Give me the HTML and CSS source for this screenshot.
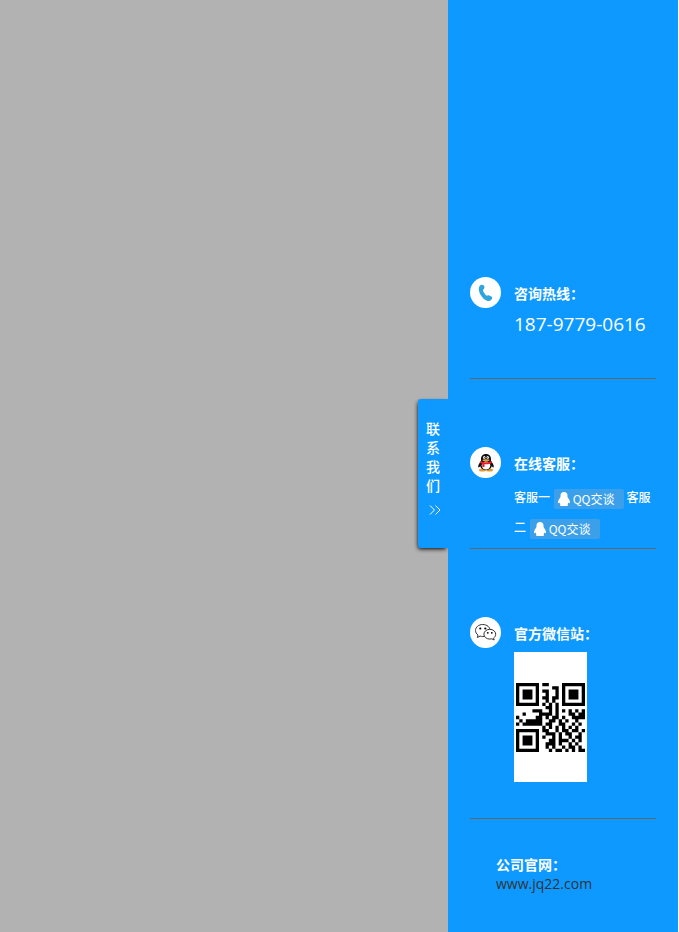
FILE: index.html
```html
<!DOCTYPE html>
<html lang="zh-CN">
<head>
<meta charset="utf-8">
<title>联系我们</title>
<link rel="stylesheet" href="styles.css">
</head>
<body>
<svg hidden>
  <symbol id="qq" viewBox="0 0 12 14"><path d="M6 0C3.800 0 2.500 1.500 2.500 3.500v1.500C1.500 6.500 0 8.500 0 10.500c0 1 .6 1 1.500 0 .2.800.600 1.300 1 1.800-.8.500-.8 1.700.5 1.700h6c1.300 0 1.300-1.200.5-1.700.4-.5.800-1 1-1.800.9 1 1.500 1 1.500 0C12 8.500 10.500 6.500 9.500 5V3.500C9.500 1.500 8.200 0 6 0z"/></symbol>
</svg>
<aside class="panel">
  <button class="tab" type="button">
    <span>联</span><span>系</span><span>我</span><span>们</span>
    <svg class="arrows" viewBox="0 0 12 10"><path d="M1 .5 5.500 5 1 9.500M6.500 .5 11 5 6.500 9.500"/></svg>
  </button>
  <section class="item">
    <svg class="icon" viewBox="0 0 31 31">
      <circle cx="15.500" cy="15.500" r="15.500" fill="#fff"/>
      <path fill="#30a5dd" d="M10 8.500c1.300-1 3-.9 4 .3.800 1.200.6 2.700-.6 3.600-.7.700-.3 1.600.3 2.700.8 1.500 1.700 2.800 2.900 3.600.7-.5 1.500-.7 2.500-.3l1.900.9c1.200.6 1.500 1.600.8 2.800-.7 1.600-2.300 2.300-4.300 1.800-4-1.100-7.900-6.200-8.600-10.700-.3-2 .1-3.700 1.100-4.700z"/>
    </svg>
    <div class="body">
      <h2>咨询热线：</h2>
      <p class="phone">187-9779-0616</p>
    </div>
  </section>
  <section class="item">
    <svg class="icon" viewBox="0 0 31 31">
      <circle cx="15.500" cy="15.500" r="15.500" fill="#fff"/>
      <ellipse cx="12.500" cy="23" rx="3.500" ry="1.500" fill="#e39a2c"/><ellipse cx="19.500" cy="23" rx="3.500" ry="1.500" fill="#e39a2c"/>
      <path fill="#111" d="M16 7c-3.300 0-5 2.200-5 5v2c-1.500 1.800-3 4-2.800 6 .2 1 1.300.3 2-.7C11 22 13 23 16 23s5-1 5.800-3.700c.7 1 1.800 1.700 2 .7.2-2-1.300-4.200-2.800-6v-2c0-2.800-1.700-5-5-5z"/>
      <ellipse cx="16" cy="18.500" rx="4.300" ry="4" fill="#fff"/>
      <ellipse cx="14.300" cy="10.500" rx="1.200" ry="1.600" fill="#fff"/><ellipse cx="17.700" cy="10.500" rx="1.200" ry="1.600" fill="#fff"/>
      <circle cx="14.600" cy="10.800" r=".5"/><circle cx="17.400" cy="10.800" r=".5"/>
      <ellipse cx="16" cy="13.200" rx="3.500" ry="1" fill="#efa52d"/>
      <path fill="#e31f2b" d="M10.500 14c3 1.700 8 1.700 11 0l.8 1.800c-2.500 1.400-5.500 1.700-7.800 1.400V20h-2.200v-3.300l-2.500-.9z"/>
    </svg>
    <div class="body">
      <h2>在线客服：</h2>
      <p class="chat">客服一 <a class="talk" href="#"><svg viewBox="0 0 12 14"><use href="#qq"/></svg>QQ交谈</a> 客服二 <a class="talk" href="#"><svg viewBox="0 0 12 14"><use href="#qq"/></svg>QQ交谈</a></p>
    </div>
  </section>
  <section class="item">
    <svg class="icon" viewBox="0 0 31 31">
      <circle cx="15.500" cy="15.500" r="15.500" fill="#fff"/>
      <g fill="#fff" stroke="#333" stroke-width="1">
        <path d="M12.800 7.500c4.200 0 7.300 2.700 7.300 6s-3.100 6-7.300 6c-1 0-1.900-.2-2.700-.4l-2.700 1.400.6-2.500c-1.500-1-2.500-2.700-2.500-4.500 0-3.300 3.100-6 7.300-6z"/>
        <path d="M19.800 12.300c3.300 0 5.900 2.200 5.900 4.900 0 1.600-.8 2.900-2.100 3.800l.5 2-2.300-1.200c-.6.200-1.300.3-2 .3-3.300 0-5.900-2.200-5.900-4.900s2.600-4.900 5.900-4.900z"/>
      </g>
      <circle cx="10.300" cy="11.500" r="1.100"/><circle cx="15.300" cy="11.500" r="1.100"/><circle cx="17.800" cy="15.800" r=".9"/><circle cx="21.800" cy="15.800" r=".9"/>
    </svg>
    <div class="body">
      <h2>官方微信站：</h2>
      <div class="qr">
        <svg viewBox="0 0 21 21" role="img" aria-label="二维码">
          <path fill-rule="evenodd" d="M0 0h7v7H0zM1 1v5h5V1zM2 2h3v3H2zM14 0h7v7h-7zM15 1v5h5V1zM16 2h3v3h-3zM0 14h7v7H0zM1 15v5h5v-5zM2 16h3v3H2z"/>
          <path class="cells" d="M8 .5h2M11 1.500h2M8 2.500h2M12 2.500h1M9 3.500h1M12 3.500h1M8 4.500h2M11 4.500h2M9 5.500h1M11 5.500h1M8 6.500h1M10 6.500h1M12 6.500h1M9 7.500h2M12 7.500h1M5 8.500h3M10 8.500h1M12 8.500h1M14 8.500h1M16 8.500h1M18 8.500h1M20 8.500h1M2 9.500h1M7 9.500h4M12 9.500h1M16 9.500h2M19 9.500h2M0 10.500h1M6 10.500h2M9 10.500h1M11 10.500h2M14 10.500h1M17 10.500h4M1 11.500h1M3 11.500h5M10 11.500h2M13 11.500h1M15 11.500h1M18 11.500h1M0 12.500h1M2 12.500h6M9 12.500h2M13 12.500h2M17 12.500h1M19 12.500h1M8 13.500h1M10 13.500h1M12 13.500h1M14 13.500h1M16 13.500h1M18 13.500h1M8 14.500h2M12 14.500h1M14 14.500h2M17 14.500h2M20 14.500h1M9 15.500h3M13 15.500h1M15 15.500h2M19 15.500h1M8 16.500h1M11 16.500h1M13 16.500h1M16 16.500h1M18 16.500h2M10 17.500h2M13 17.500h3M17 17.500h1M19 17.500h1M9 18.500h3M13 18.500h1M16 18.500h1M18 18.500h1M9 19.500h1M11 19.500h1M14 19.500h1M16 19.500h2M19 19.500h1M10 20.500h1M12 20.500h2M15 20.500h1M17 20.500h1M19 20.500h2"/>
        </svg>
      </div>
    </div>
  </section>
  <section class="site">
    <h2>公司官网：</h2>
    <a href="#">www.jq22.com</a>
  </section>
</aside>
</body>
</html>
```
FILE: styles.css
```css
* { box-sizing: border-box; }
body {
  margin: 0;
  min-height: 100vh;
  display: flex;
  justify-content: flex-end;
  background: #b2b2b2;
  border-right: 1px solid #fff;
  font-family: "Open Sans", "Noto Sans CJK SC", sans-serif;
  color: #fff;
}
.panel {
  position: relative;
  width: 230px;
  padding: 209px 22px 0;
  background: #0d99ff;
}
.tab {
  position: absolute;
  left: -30px;
  top: 399px;
  width: 30px;
  height: 149px;
  padding: 20px 0 0;
  border: 0;
  border-radius: 3px 0 0 3px;
  display: flex;
  flex-direction: column;
  align-items: center;
  background: #0d99ff;
  box-shadow: -1px 2px 4px -1px #000;
  clip-path: inset(-8px 0 -8px -8px);
  color: #fff;
  font: 500 14px/19px "Noto Sans CJK SC", sans-serif;
  cursor: pointer;
}
.arrows {
  width: 12px;
  height: 10px;
  margin: 10px 0 0 4px;
  fill: none;
  stroke: #fff;
}
.item {
  display: flex;
  gap: 13px;
  height: 170px;
  padding-top: 68px;
  border-bottom: 1px solid #666;
}
.item:nth-of-type(3) { height: 270px; }
.icon { flex: none; width: 31px; height: 31px; }
.body { flex: 1; padding-top: 6px; }
h2 {
  margin: 0;
  font: bold 14px/20px "Noto Sans CJK SC", sans-serif;
}
p { margin: 0; }
.phone {
  font-size: 19px;
  line-height: 42px;
  white-space: nowrap;
}
.chat {
  padding-top: 9px;
  font: 500 12px/30px "Noto Sans CJK SC", sans-serif;
}
.talk {
  display: inline-flex;
  align-items: center;
  gap: 3px;
  width: 70px;
  height: 20px;
  margin-left: 1px;
  padding-left: 4px;
  border-radius: 2px;
  vertical-align: middle;
  background: #3ba0e9;
  color: #fff;
  font: 12px/20px "Noto Sans CJK SC", sans-serif;
  text-decoration: none;
}
.talk svg { width: 12px; height: 14px; fill: #fff; }
.qr {
  display: flex;
  align-items: center;
  justify-content: center;
  width: 73px;
  height: 130px;
  margin-top: 9px;
  background: #fff;
}
.qr svg { width: 69px; height: 69px; }
.cells { stroke: #000; }
.site { padding: 35px 0 0 26px; }
.site a {
  display: block;
  color: #333;
  font-size: 14px;
  line-height: 20px;
  text-decoration: none;
}
```
